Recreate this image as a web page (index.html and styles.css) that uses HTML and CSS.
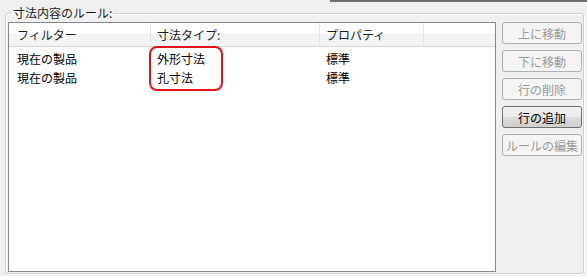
FILE: index.html
```html
<!DOCTYPE html>
<html lang="ja">
<head>
  <meta charset="UTF-8" />
  <title>寸法内容のルール</title>
  <link rel="stylesheet" href="styles.css">
</head>
<body>

  <div class="topbar"></div>

  <fieldset class="group">
    <legend>寸法内容のルール:</legend>

    <div class="content">
      <!-- Rule list -->
      <div class="list">
        <div class="list-head">
          <div class="col col-filter">フィルター</div>
          <div class="col col-type">寸法タイプ:</div>
          <div class="col col-prop">プロパティ</div>
          <div class="col col-rest"></div>
        </div>
        <div class="list-body">
          <div class="row">
            <div class="col col-filter">現在の製品</div>
            <div class="col col-type">外形寸法</div>
            <div class="col col-prop">標準</div>
          </div>
          <div class="row">
            <div class="col col-filter">現在の製品</div>
            <div class="col col-type">孔寸法</div>
            <div class="col col-prop">標準</div>
          </div>
        </div>
        <div class="mark"></div>
      </div>

      <!-- Buttons -->
      <div class="buttons">
        <button disabled>上に移動</button>
        <button disabled>下に移動</button>
        <button disabled>行の削除</button>
        <button>行の追加</button>
        <button disabled>ルールの編集</button>
      </div>
    </div>
  </fieldset>

</body>
</html>
```

FILE: styles.css
```css
body {
  margin: 0;
  background: #f0f0f0;
  font-family: "Noto Sans CJK JP", "Noto Sans", sans-serif;
  font-size: 12px;
  color: #000;
  width: 587px;
  height: 276px;
  overflow: hidden;
}

.topbar {
  height: 2px;
  margin-left: 330px;
  background: #6f6f6f;
}

.group {
  margin: 3px 3px 0 5px;
  padding: 1px 1px 1px 2px;
  border: 1px solid #c8d3db;
  border-radius: 3px;
  box-shadow: inset 1px 1px #fff, 1px 1px #fff;
}

.group legend {
  padding: 0 1px;
  margin-left: 4px;
  line-height: 16px;
  color: #1a1a1a;
}

.content {
  display: flex;
  gap: 6px;
}

.list {
  position: relative;
  width: 488px;
  height: 250px;
  box-sizing: border-box;
  background: #fff;
  border: 1px solid #828790;
}

.list-head {
  display: flex;
  height: 24px;
  box-sizing: border-box;
  border-bottom: 1px solid #d5d5d5;
  background: linear-gradient(#ffffff 0%, #ffffff 45%, #f3f4f6 46%, #f3f4f6 100%);
  color: #1e1e1e;
  line-height: 23px;
}

.list-head .col + .col {
  border-left: 1px solid #e3e5e8;
}

.col {
  padding-left: 7px;
  box-sizing: border-box;
  white-space: nowrap;
}

.col-filter {
  width: 141px;
  padding-left: 8px;
}

.col-type {
  width: 169px;
}

.col-prop {
  width: 104px;
}

.col-rest {
  flex: 1;
}

.list-head .col-type,
.list-head .col-prop {
  padding-left: 6px;
}

.list-body {
  padding-top: 2px;
}

.row {
  display: flex;
  line-height: 19px;
}

/* red annotation box over the type column */
.mark {
  position: absolute;
  left: 140px;
  top: 23px;
  width: 74px;
  height: 45px;
  box-sizing: border-box;
  border: 2px solid #e3121c;
  border-radius: 8px;
}

.buttons {
  display: flex;
  flex-direction: column;
  gap: 6px;
  width: 80px;
}

button {
  height: 22px;
  padding: 0;
  font-family: inherit;
  font-size: 12px;
  border: 1px solid #707070;
  border-radius: 3px;
  background: linear-gradient(#f2f2f2 0%, #ebebeb 50%, #dddddd 51%, #cfcfcf 100%);
  color: #000;
}

button:disabled {
  border-color: #adb2b5;
  background: #f4f4f4;
  color: #9a9a9a;
}
```
